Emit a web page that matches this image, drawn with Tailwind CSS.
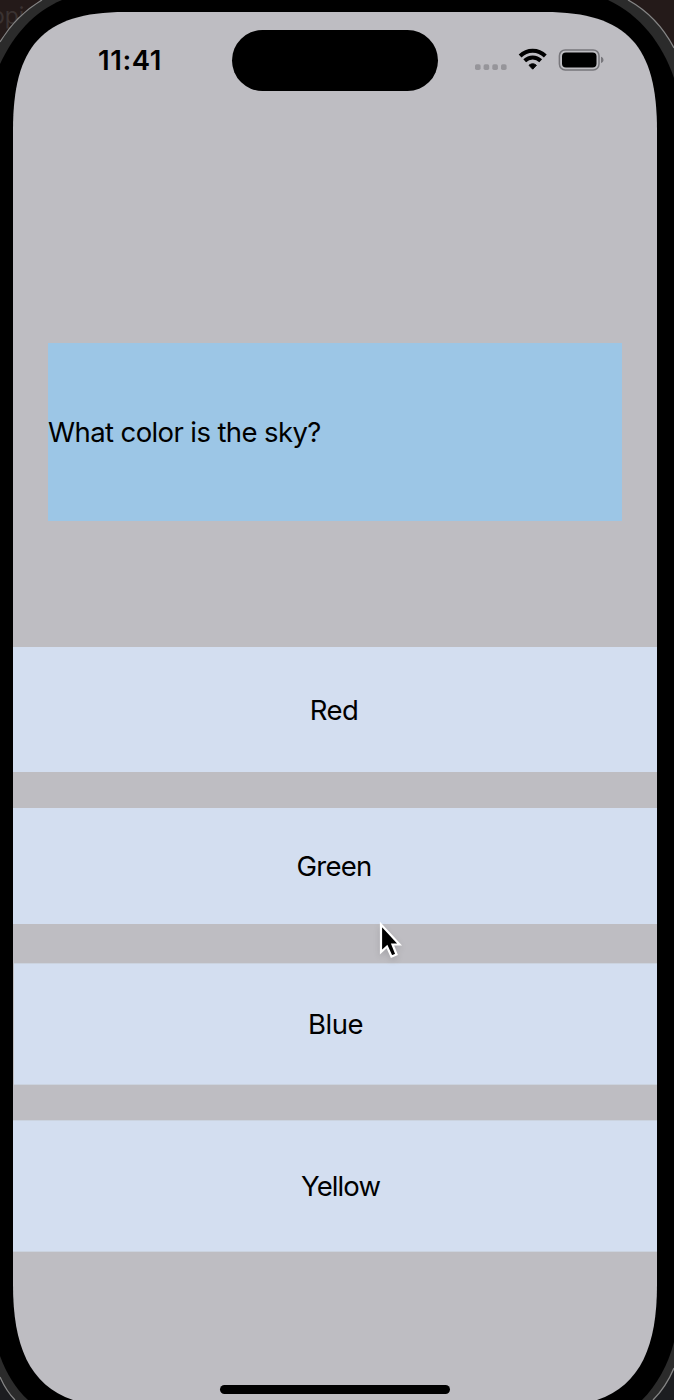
<!DOCTYPE html>
<html lang="en">
<head>
<meta charset="utf-8">
<meta name="viewport" content="width=device-width, initial-scale=1">
<title>Quiz</title>
<script src="https://cdn.jsdelivr.net/npm/@tailwindcss/browser@4"></script>
</head>
<body class="bg-black">
<div class="relative h-[1400px] w-[674px] overflow-hidden bg-[#241a19] font-['Inter',sans-serif] text-black">
  <!-- window behind the device -->
  <span class="absolute top-[2px] -left-[9px] text-[23px] leading-7 text-[#3a3231]">opi</span>
  <!-- device body and screen -->
  <svg class="absolute inset-0" width="674" height="1400" viewBox="0 0 674 1400" fill="none" aria-hidden="true">
    <path d="M0 42C11 24 25 10 42 0H628C648 11 663 27 674 48V1400H0Z" fill="#2b2b2b"/>
    <path d="M0 64C14 34 34 12 62 0H608C640 15 662 43 674 78V1342C668 1365 657 1385 642 1400H28C16 1389 6 1373 0 1356Z" fill="#000"/>
    <path d="M0 1377C4 1386 9 1394 15 1400H0ZM674 1368C669 1380 662 1391 653 1400H674Z" fill="#1c1d20"/>
    <path d="M0 42C11 24 25 10 42 0M628 0C648 11 663 27 674 48M0 1377C4 1386 9 1394 15 1400M674 1368C669 1380 662 1391 653 1400" stroke="#858585" stroke-width="1.3"/>
    <path d="M13 130C13 47 42 12 125 12H545C628 12 657 47 657 130V1285C657 1345 641 1385 597 1400H73C29 1385 13 1345 13 1285Z" fill="#bebdc2"/>
  </svg>

  <div class="relative mr-[17px] ml-[13px] flex h-full flex-col pt-[30px]">
    <header class="flex h-[61px] items-center">
      <time class="mb-[2px] ml-[85px] w-[134px] text-[27.5px] leading-[60px] font-semibold tracking-[0.6px]">11:41</time>
      <div class="h-[61px] w-[206px] rounded-full bg-black"></div>
      <svg class="mb-[2px] ml-[36px]" width="132" height="30" viewBox="0 0 132 30" fill="none" aria-label="Wi-Fi and battery">
        <g fill="#96959a">
          <rect x="1" y="19.200" width="5.600" height="5.800" rx="1.700"/>
          <rect x="9.600" y="19.200" width="5.600" height="5.800" rx="1.700"/>
          <rect x="18.300" y="19.200" width="5.600" height="5.800" rx="1.700"/>
          <rect x="27" y="19.200" width="5.600" height="5.800" rx="1.700"/>
        </g>
        <g stroke="#000" stroke-width="4">
          <path d="M46.100 11C53.200 4 64.200 4 71.300 11"/>
          <path d="M50.700 15.700C55.200 11.400 62.200 11.400 66.700 15.700"/>
        </g>
        <path d="M55 20.300C57.200 18.300 60.200 18.300 62.400 20.300L58.700 24.200Z" fill="#000" stroke="#000" stroke-width="1" stroke-linejoin="round"/>
        <rect x="85.400" y="4.900" width="39.600" height="20" rx="5.800" stroke="#77767b" stroke-width="1.500"/>
        <rect x="88" y="7.400" width="34.500" height="15" rx="4" fill="#000"/>
        <path d="M127 11.700C130.300 12.800 130.300 17 127 18.100Z" fill="#77767b"/>
      </svg>
    </header>
    <main class="mt-[252px] flex flex-col">
      <div class="mr-[35px] ml-[35px] flex h-[178px] items-center bg-[#9cc6e6] text-[27.5px] leading-9"><h1 class="whitespace-nowrap tracking-[-0.6px]">What color is the sky?</h1></div>
      <button class="mt-[126px] h-[125px] bg-[#d3def0] pr-[2px] text-[27.5px] leading-9 tracking-[-0.6px]">Red</button>
      <button class="mt-[36px] h-[116px] bg-[#d3def0] pr-[2px] text-[27.5px] leading-9 tracking-[-0.7px]">Green</button>
      <button class="mt-[39px] ml-[1px] h-[122px] border-y border-[#cbd3df] bg-[#d3def0] text-[27.5px] leading-9 tracking-[-0.5px]">Blue</button>
      <button class="mt-[35px] h-[132px] border-y border-[#cbd3df] bg-[#d3def0] pl-[11px] text-[27.5px] leading-9 tracking-[-0.9px]">Yellow</button>
    </main>
    <div class="mt-[133px] ml-[207px] h-[9px] w-[230px] shrink-0 rounded-full bg-black"></div>
  </div>

  <!-- pointer -->
  <svg class="absolute top-[918px] left-[374px] drop-shadow-md" width="34" height="46" viewBox="0 0 34 46" aria-hidden="true">
    <path d="M7 6.500V34L13 28.500L17.500 38.500L22.500 36.500L18.500 26.500H25.500Z" fill="#000" stroke="#fff" stroke-width="2.200"/>
  </svg>
</div>
</body>
</html>
